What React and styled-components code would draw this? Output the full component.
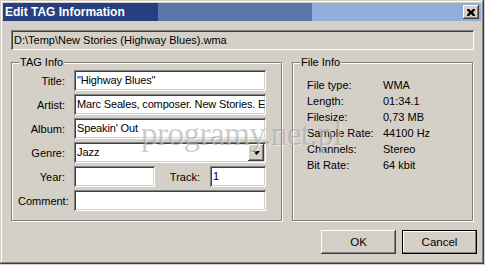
import React from "react";
import styled, { createGlobalStyle } from "styled-components";

const GlobalStyle = createGlobalStyle`
  html, body {
    margin: 0;
    padding: 0;
    background: #d4d0c8;
  }
  body {
    font-family: "Liberation Sans", Arial, sans-serif;
    font-size: 11px;
    color: #000;
  }
  * { box-sizing: border-box; }
`

const raised = `
  box-shadow: inset -1px -1px #404040, inset 1px 1px #fff, inset -2px -2px #808080, inset 2px 2px #d4d0c8;
`
const sunken = `
  box-shadow: inset 1px 1px #808080, inset -1px -1px #fff, inset 2px 2px #404040, inset -2px -2px #d4d0c8;
`

const Window = styled.div`
  position: relative;
  width: 484px;
  height: 264px;
  padding: 3px;
  background: #d4d0c8;
  display: flex;
  flex-direction: column;
  box-shadow: inset -1px -1px #404040, inset 1px 1px #d4d0c8, inset -2px -2px #808080, inset 2px 2px #fff;
`
const TitleBar = styled.div`
  height: 18px;
  display: flex;
  align-items: center;
  padding: 0 2px 0 2px;
  background: linear-gradient(to right, #24407f 0 155px, #5a77ab 155px 309px, #8faed9 309px);
  color: #fff;
  font-weight: bold;
  font-size: 12px;
`
const CloseButton = styled.div`
  margin-left: auto;
  width: 16px;
  height: 14px;
  background: #d4d0c8;
  display: flex;
  align-items: center;
  justify-content: center;
  ${raised}
`
const Content = styled.div`
  padding: 9px 7px 0 8px;
  display: flex;
  flex-direction: column;
`
const PathField = styled.div`
  height: 20px;
  line-height: 20px;
  padding: 0 3px;
  ${sunken}
`
const Panels = styled.div`
  margin-top: 12px;
  display: grid;
  grid-template-columns: 271px 181px;
  column-gap: 10px;
`
const GroupBox = styled.div`
  position: relative;
  height: 159px;
  border: 1px solid #808080;
  box-shadow: inset 1px 1px #fff, 1px 1px #fff;
  padding: ${p => p.$pad};
`
const Caption = styled.span`
  position: absolute;
  top: -8px;
  left: 7px;
  padding: 0 1px;
  background: #d4d0c8;
  line-height: 14px;
`
const FormGrid = styled.div`
  display: grid;
  grid-template-columns: 47px 192px;
  grid-auto-rows: 21px;
  column-gap: 9px;
  row-gap: 3px;
`
const Label = styled.label`
  text-align: right;
  align-self: center;
  white-space: nowrap;
`
const Input = styled.div`
  height: 21px;
  width: ${p => p.$w || "100%"};
  background: #fff;
  line-height: 21px;
  padding: 0 2px 0 3px;
  white-space: nowrap;
  overflow: hidden;
  letter-spacing: ${p => p.$tight ? "-0.15px" : "normal"};
  ${sunken}
`
const Combo = styled(Input)`
  display: flex;
  align-items: center;
  padding: 0 2px 0 3px;
  span { flex: 1; }
`
const DropButton = styled.div`
  width: 16px;
  height: 17px;
  background: #d4d0c8;
  display: flex;
  align-items: center;
  justify-content: center;
  ${raised}
`
const SplitRow = styled.div`
  display: flex;
  align-items: center;
`
const InlineLabel = styled.label`
  margin-left: auto;
  margin-right: 10px;
`
const InfoGrid = styled.div`
  display: grid;
  grid-template-columns: 76px auto;
  grid-auto-rows: 16px;
  line-height: 16px;
`
const ButtonRow = styled.div`
  margin-top: 9px;
  margin-right: -3px;
  display: flex;
  justify-content: flex-end;
  gap: 6px;
`
const Button = styled.div`
  width: 75px;
  height: 24px;
  display: flex;
  align-items: center;
  justify-content: center;
  font-size: 11.5px;
  background: #d4d0c8;
  ${raised}
  ${p => p.$default && `
    border: 1px solid #000;
    box-shadow: inset -1px -1px #808080, inset 1px 1px #fff;
  `}
`
const Watermark = styled.div`
  position: absolute;
  left: 141px;
  top: 116px;
  font-family: "Liberation Serif", "Times New Roman", serif;
  font-size: 33px;
  letter-spacing: -0.5px;
  color: rgba(140, 140, 140, 0.45);
  text-shadow: 1px 1px rgba(255, 255, 255, 0.45);
  pointer-events: none;
`

const tagRows = [
  ["Title:", "\"Highway Blues\""],
  ["Artist:", "Marc Seales, composer. New Stories. E"],
  ["Album:", "Speakin' Out"],
]

const fileInfo = [
  ["File type:", "WMA"],
  ["Length:", "01:34.1"],
  ["Filesize:", "0,73 MB"],
  ["Sample Rate:", "44100 Hz"],
  ["Channels:", "Stereo"],
  ["Bit Rate:", "64 kbit"],
]

export default function App() {
  return (
    <Window>
      <GlobalStyle />
      <TitleBar>
        Edit TAG Information
        <CloseButton>
          <svg width="8" height="7" viewBox="0 0 8 7">
            <path d="M0 0h2l2 2 2-2h2v1l-2 2.5 2 2.5v1h-2l-2-2-2 2h-2v-1l2-2.5-2-2.5z" fill="#000" />
          </svg>
        </CloseButton>
      </TitleBar>
      <Content>
        <PathField>D:\Temp\New Stories (Highway Blues).wma</PathField>
        <Panels>
          <GroupBox $pad="7px 0 0 6px">
            <Caption>TAG Info</Caption>
            <FormGrid>
              {tagRows.map(([l, v]) => (
                <React.Fragment key={l}>
                  <Label>{l}</Label>
                  <Input $tight>{v}</Input>
                </React.Fragment>
              ))}
              <Label>Genre:</Label>
              <Combo>
                <span>Jazz</span>
                <DropButton>
                  <svg width="7" height="4" viewBox="0 0 7 4">
                    <path d="M0 0h7L3.5 4z" fill="#000" />
                  </svg>
                </DropButton>
              </Combo>
              <Label>Year:</Label>
              <SplitRow>
                <Input $w="81px" />
                <InlineLabel>Track:</InlineLabel>
                <Input $w="56px">1</Input>
              </SplitRow>
              <Label>Comment:</Label>
              <Input />
            </FormGrid>
          </GroupBox>
          <GroupBox $pad="14px 0 0 14px">
            <Caption>File Info</Caption>
            <InfoGrid>
              {fileInfo.map(([l, v]) => (
                <React.Fragment key={l}>
                  <span>{l}</span>
                  <span>{v}</span>
                </React.Fragment>
              ))}
            </InfoGrid>
          </GroupBox>
        </Panels>
        <ButtonRow>
          <Button>OK</Button>
          <Button $default>Cancel</Button>
        </ButtonRow>
      </Content>
      <Watermark>programy.net.pl</Watermark>
    </Window>
  );
}
